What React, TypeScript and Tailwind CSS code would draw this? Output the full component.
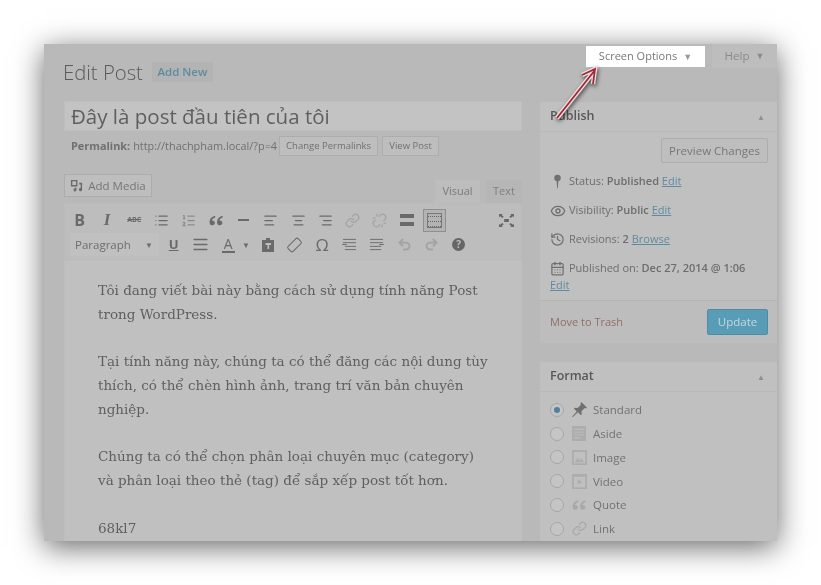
import type { ReactNode } from "react";
import {
  AlignCenter,
  AlignJustify,
  AlignLeft,
  AlignRight,
  CalendarDays,
  Eye,
  History,
  Link,
  List,
  ListOrdered,
  Redo2,
  Undo2,
  Unlink,
} from "lucide-react";

const TEXT_BLOCKS = [
  ["Tôi đang viết bài này bằng cách sử dụng tính năng Post", "trong WordPress."],
  [
    "Tại tính năng này, chúng ta có thể đăng các nội dung tùy",
    "thích, có thể chèn hình ảnh, trang trí văn bản chuyên",
    "nghiệp.",
  ],
  ["Chúng ta có thể chọn phân loại chuyên mục (category)", "và phân loại theo thẻ (tag) để sắp xếp post tốt hơn."],
  ["68kl7"],
];

function Tool({ children, className = "" }: { children: ReactNode; className?: string }) {
  return (
    <span className={`flex h-[24px] w-[27.3px] shrink-0 items-center justify-center text-[#6a6a6a] ${className}`}>
      {children}
    </span>
  );
}

function QuoteIcon({ className = "" }: { className?: string }) {
  return (
    <svg viewBox="0 0 16 12" className={className} fill="currentColor">
      <path d="M6.8 0.5C3 1.6 0.6 4 0.6 7.6c0 2.4 1.3 3.9 3.2 3.9 1.6 0 2.9-1.2 2.9-2.8S5.5 6 4 6c-.3 0-.6 0-.8.1.3-1.5 1.7-2.8 4-3.6z" />
      <path d="M15.4 0.5c-3.8 1.1-6.2 3.5-6.2 7.1 0 2.4 1.3 3.9 3.2 3.9 1.6 0 2.9-1.2 2.9-2.8S14.1 6 12.6 6c-.3 0-.6 0-.8.1.3-1.5 1.7-2.8 4-3.6z" />
    </svg>
  );
}

function Toolbar() {
  return (
    <div className="flex h-[57px] shrink-0 flex-col border border-[#bbbbbb] bg-[#bdbdbd] pl-[1px] pt-[3px]">
      <div className="flex h-[26px] items-center">
        <Tool className="text-[16px] font-bold">B</Tool>
        <Tool className="font-['Liberation_Serif',serif] text-[17px] font-bold italic">I</Tool>
        <Tool className="text-[7px] font-bold line-through">ABC</Tool>
        <Tool><List size={15} /></Tool>
        <Tool><ListOrdered size={15} className="opacity-60" /></Tool>
        <Tool><QuoteIcon className="h-[11px] w-[14px]" /></Tool>
        <Tool><span className="h-[2px] w-[11px] bg-[#6a6a6a]" /></Tool>
        <Tool><AlignLeft size={15} /></Tool>
        <Tool><AlignCenter size={15} /></Tool>
        <Tool><AlignRight size={15} /></Tool>
        <Tool><Link size={15} className="text-[#a3a3a3]" /></Tool>
        <Tool><Unlink size={15} className="text-[#a3a3a3]" /></Tool>
        <Tool>
          <span className="flex h-[12px] w-[14px] flex-col justify-between">
            <span className="h-[4px] bg-[#6a6a6a]" />
            <span className="h-[4px] bg-[#6a6a6a]" />
          </span>
        </Tool>
        <span className="ml-[2px] flex h-[23px] w-[23px] shrink-0 items-center justify-center border border-[#8f8f8f] bg-[#b3b3b3]">
          <span className="grid h-[15px] w-[15px] grid-cols-1 gap-[1px] border border-[#777]">
            <span className="border-b border-dotted border-[#666]" />
            <span className="border-b border-dotted border-[#666]" />
            <span className="border-b border-dotted border-[#666]" />
          </span>
        </span>
        <span className="ml-auto mr-[7px] flex h-[24px] w-[16px] items-center justify-center">
          <svg viewBox="0 0 16 14" className="h-[13px] w-[15px] text-[#666]" fill="currentColor">
            <path d="M0 0h4L2.8 1.2 5 3 3.4 4.4 1.3 2.4 0 3.6zM16 0h-4l1.2 1.2L11 3l1.6 1.4 2.1-2L16 3.6zM0 14h4l-1.2-1.2L5 11 3.4 9.6l-2.1 2L0 10.4zM16 14h-4l1.2-1.2L11 11l1.6-1.4 2.1 2 1.3-1.2zM5.5 5.5h5v3h-5z" />
          </svg>
        </span>
      </div>
      <div className="mt-[-1px] flex h-[25px] items-center">
        <span className="ml-[4px] flex h-[23px] w-[89px] items-center justify-between bg-[#c0c0c0] pl-[5px] pr-[6px] text-[11.5px] text-[#6d6d6d]">
          Paragraph
          <span className="text-[8px]">▼</span>
        </span>
        <span className="w-[1px]" />
        <Tool className="text-[13px] font-bold underline">U</Tool>
        <Tool><AlignJustify size={17} /></Tool>
        <Tool className="w-[20px] text-[14px]">
          <span className="border-b-2 border-[#6a6a6a] px-[2px] leading-[15px]">A</span>
        </Tool>
        <span className="w-[12px] text-[8px] text-[#6a6a6a]">▼</span>
        <Tool className="w-[20px]">
          <svg viewBox="0 0 14 14" className="h-[14px] w-[14px]" fill="currentColor">
            <path d="M5 0h4v2h4v12H1V2h4zM4.5 5v2h2v4h1.6V7h2V5z" fillRule="evenodd" />
          </svg>
        </Tool>
        <Tool>
          <span className="h-[8px] w-[15px] -rotate-45 rounded-[2px] border border-[#6a6a6a]" />
        </Tool>
        <Tool className="text-[17px]">Ω</Tool>
        <Tool>
          <svg viewBox="0 0 16 14" className="h-[13px] w-[15px]" fill="none" stroke="currentColor">
            <path d="M1 1.5h14M1 5h14M3 9h12M3 12.5h12M5 7H0" />
          </svg>
        </Tool>
        <Tool>
          <svg viewBox="0 0 16 14" className="h-[13px] w-[15px]" fill="none" stroke="currentColor">
            <path d="M1 1.5h14M1 5h14M1 9h12M1 12.5h12M11 7h5" />
          </svg>
        </Tool>
        <Tool><Undo2 size={15} className="text-[#a3a3a3]" strokeWidth={3} /></Tool>
        <Tool><Redo2 size={15} className="text-[#a3a3a3]" strokeWidth={3} /></Tool>
        <Tool>
          <span className="flex h-[13px] w-[13px] items-center justify-center rounded-full bg-[#666] text-[10px] font-bold text-[#bdbdbd]">
            ?
          </span>
        </Tool>
      </div>
    </div>
  );
}

function EditorColumn() {
  return (
    <div className="flex w-[458px] shrink-0 flex-col">
      <div className="flex h-[30px] shrink-0 items-center border border-[#bebebe] bg-[#c3c3c3] pl-[6px] text-[20.5px] text-[#5f5f5f]">
        Đây là post đầu tiên của tôi
      </div>
      <div className="mt-[5px] flex h-[20px] shrink-0 items-center pl-[7px] text-[10.9px] text-[#707070]">
        <b className="font-bold">Permalink:</b>
        <span className="ml-[3px]">http://thachpham.local/?p=4</span>
        <span className="ml-[2px] flex h-[20px] w-[99px] items-center justify-center border border-[#adadad] bg-[#bebebe] text-[9.5px]">
          Change Permalinks
        </span>
        <span className="ml-[4px] flex h-[20px] w-[57px] items-center justify-center border border-[#adadad] bg-[#bebebe] text-[9.5px]">
          View Post
        </span>
      </div>
      <div className="mt-[18px] flex h-[29px] shrink-0 items-start justify-between">
        <span className="flex h-[23px] w-[88px] items-center justify-center gap-[5px] border border-[#adadad] bg-[#bebebe] text-[11.5px] text-[#757575]">
          <svg viewBox="0 0 14 14" className="h-[13px] w-[13px]" fill="#6a6a6a">
            <path d="M1 1h7v7H1zM2.5 2.5v4h4v-4zM10 4h3v7.5a1.7 1.7 0 1 1-1.5-1.7V6H10zM5 9.5h2v2.2A1.6 1.6 0 1 1 5 10.2z" fillRule="evenodd" />
          </svg>
          Add Media
        </span>
        <div className="flex items-end self-end text-[11px] text-[#7b7b7b]">
          <span className="flex h-[23px] w-[45px] items-center justify-center bg-[#bdbdbd]">Visual</span>
          <span className="ml-[6px] flex h-[23px] w-[36px] items-center justify-center bg-[#b6b6b6] text-[#808080]">Text</span>
        </div>
      </div>
      <Toolbar />
      <div className="min-h-[300px] flex-1 border border-[#bebebe] bg-[#c0c0c0] pl-[33px] pt-[18px] font-['DejaVu_Serif',serif] text-[13.5px] leading-[23.75px] text-[#5f5f5f]">
        {TEXT_BLOCKS.map((block, i) => (
          <div key={i} className="mb-[23.75px] whitespace-nowrap">
            {block.map((line) => (
              <div key={line}>{line}</div>
            ))}
          </div>
        ))}
      </div>
    </div>
  );
}

function PanelHeader({ title }: { title: string }) {
  return (
    <div className="flex h-[30px] shrink-0 items-center justify-between border-b border-[#b9b9b9] pl-[10px] pr-[12px] text-[12.5px] font-semibold text-[#585858]">
      {title}
      <span className="text-[8px] font-normal text-[#8f8f8f]">▲</span>
    </div>
  );
}

function MetaRow({ icon, children }: { icon: ReactNode; children: ReactNode }) {
  return (
    <div className="flex h-[29px] items-center">
      <span className="flex w-[17px] justify-center text-[#707070]">{icon}</span>
      <span className="ml-[3px] whitespace-nowrap">{children}</span>
    </div>
  );
}

function EditLink({ children }: { children: ReactNode }) {
  return <span className="text-[#5d8ba0] underline">{children}</span>;
}

function PublishBox() {
  return (
    <div className="flex h-[243px] shrink-0 flex-col border-y border-[#b9b9b9] bg-[#c0c0c0]">
      <PanelHeader title="Publish" />
      <div className="flex justify-end pr-[9px] pt-[6px]">
        <span className="flex h-[25px] w-[107px] items-center justify-center rounded-[2px] border border-[#adadad] bg-[#bebebe] text-[11.5px] text-[#777]">
          Preview Changes
        </span>
      </div>
      <div className="flex flex-col pl-[9px] pt-[4px] text-[11px] text-[#6d6d6d]">
        <MetaRow
          icon={
            <svg viewBox="0 0 10 16" className="h-[15px] w-[9px]" fill="currentColor">
              <circle cx="5" cy="4" r="3.6" />
              <path d="M4 7h2l-.6 8.5h-.8z" />
            </svg>
          }
        >
          Status: <b className="font-semibold">Published</b> <EditLink>Edit</EditLink>
        </MetaRow>
        <MetaRow icon={<Eye size={16} />}>
          Visibility: <b className="font-semibold">Public</b> <EditLink>Edit</EditLink>
        </MetaRow>
        <MetaRow icon={<History size={15} />}>
          Revisions: <b className="font-semibold">2</b> <EditLink>Browse</EditLink>
        </MetaRow>
        <MetaRow icon={<CalendarDays size={15} />}>
          Published on: <b className="font-semibold">Dec 27, 2014 @ 1:06</b>
        </MetaRow>
        <div className="-mt-[6px] h-[17px] pl-[1px]">
          <EditLink>Edit</EditLink>
        </div>
      </div>
      <div className="mt-[6px] flex flex-1 items-center justify-between border-t border-[#b5b5b5] bg-[#bdbdbd] pl-[10px] pr-[9px] text-[11px]">
        <span className="text-[#8f6f66]">Move to Trash</span>
        <span className="flex h-[26px] w-[61px] items-center justify-center rounded-[2px] border border-[#4f8ca5] bg-[#589cb6] text-[11.5px] text-[#c4d9e2]">
          Update
        </span>
      </div>
    </div>
  );
}

const FORMATS: { label: string; icon: ReactNode }[] = [
  {
    label: "Standard",
    icon: (
      <svg viewBox="0 0 16 16" className="h-[15px] w-[15px] text-[#707070]" fill="currentColor">
        <path d="M10 0l6 6-1.5 1-1-.5L10 10l.5 3-1 1-3.2-3.2L1 16l-1-.4 5-5.5L2 7l1-1 3 .5L9.500 3 9 2z" />
      </svg>
    ),
  },
  {
    label: "Aside",
    icon: (
      <svg viewBox="0 0 15 16" className="h-[15px] w-[14px] text-[#adadad]" fill="currentColor">
        <path d="M0 0h15v16H0zM2 3v1h11V3zM2 6v1h11V6zM2 9v1h11V9zM2 12v1h7v-1z" fillRule="evenodd" />
      </svg>
    ),
  },
  {
    label: "Image",
    icon: (
      <svg viewBox="0 0 16 16" className="h-[15px] w-[15px] text-[#adadad]" fill="currentColor">
        <path d="M0 0h16v16H0zM2 2v12h12V2zM3 13l3-5 2 3 2-2 3 4z" fillRule="evenodd" />
      </svg>
    ),
  },
  {
    label: "Video",
    icon: (
      <svg viewBox="0 0 16 16" className="h-[15px] w-[15px] text-[#adadad]" fill="currentColor">
        <path d="M0 0h16v16H0zM2 3v11h12V3zM6 5.500l5 3-5 3z" fillRule="evenodd" />
      </svg>
    ),
  },
  { label: "Quote", icon: <QuoteIcon className="h-[12px] w-[14px] text-[#a8a8a8]" /> },
  { label: "Link", icon: <Link size={15} className="text-[#a8a8a8]" /> },
];

function FormatBox() {
  return (
    <div className="mt-[17px] flex flex-1 flex-col border-t border-[#b9b9b9] bg-[#c0c0c0]">
      <PanelHeader title="Format" />
      <div className="flex flex-col pl-[10px] pt-[6px] text-[11.5px] text-[#727272]">
        {FORMATS.map(({ label, icon }, i) => (
          <div key={label} className="flex h-[23.8px] shrink-0 items-center">
            <span className="flex h-[14px] w-[14px] shrink-0 items-center justify-center rounded-full border border-[#a6a6a6] bg-[#c5c5c5]">
              {i === 0 && <span className="h-[6px] w-[6px] rounded-full bg-[#4f8398]" />}
            </span>
            <span className="ml-[7px] flex w-[16px] justify-center">{icon}</span>
            <span className="ml-[6px]">{label}</span>
          </div>
        ))}
      </div>
    </div>
  );
}

export default function App() {
  return (
    <div className="relative h-[585px] w-[821px] overflow-hidden bg-white pl-[44px] pt-[44px] font-['Open_Sans',sans-serif]">
      <div className="flex h-[497px] w-[733px] flex-col overflow-hidden bg-[#b9b9b9] shadow-[0_6px_28px_rgba(0,0,0,0.6)] blur-[0.35px]">
        <div className="flex h-[24px] shrink-0 items-start justify-end">
          <span className="mt-[2px] flex h-[21px] w-[119px] items-center justify-center gap-[6px] bg-white text-[11px] text-[#777]">
            Screen Options
            <span className="text-[9px] text-[#999]">▼</span>
          </span>
          <span className="ml-[7px] flex h-[24px] w-[65px] items-center justify-center gap-[6px] bg-[#bdbdbd] text-[11.5px] text-[#8a8a8a]">
            Help
            <span className="text-[9px]">▼</span>
          </span>
        </div>
        <div className="-mt-[10px] flex h-[43px] shrink-0 items-center pb-[15px] pl-[19px]">
          <h1 className="text-[20.3px] font-light text-[#5a5a5a]">Edit Post</h1>
          <span className="ml-[9px] flex h-[20px] w-[61px] items-center justify-center bg-[#b3b3b3] text-[11.5px] font-semibold text-[#5d8ba0]">
            Add New
          </span>
        </div>
        <div className="flex min-h-0 flex-1 gap-[18px] pl-[20px]">
          <EditorColumn />
          <div className="flex min-w-0 flex-1 flex-col">
            <PublishBox />
            <FormatBox />
          </div>
        </div>
      </div>
      {/* annotation arrow */}
      <svg viewBox="0 0 50 60" className="absolute left-[550px] top-[66px] h-[60px] w-[50px] drop-shadow-[1px_2px_2px_rgba(0,0,0,0.6)]" fill="none">
        <path d="M7 52 L45 4 M32 9 L45 3 L43 18" stroke="#f0dada" strokeWidth="4.500" />
        <path d="M7 52 L45 4 M32 9 L45 3 L43 18" stroke="#9b2a3a" strokeWidth="1.800" />
      </svg>
    </div>
  );
}
